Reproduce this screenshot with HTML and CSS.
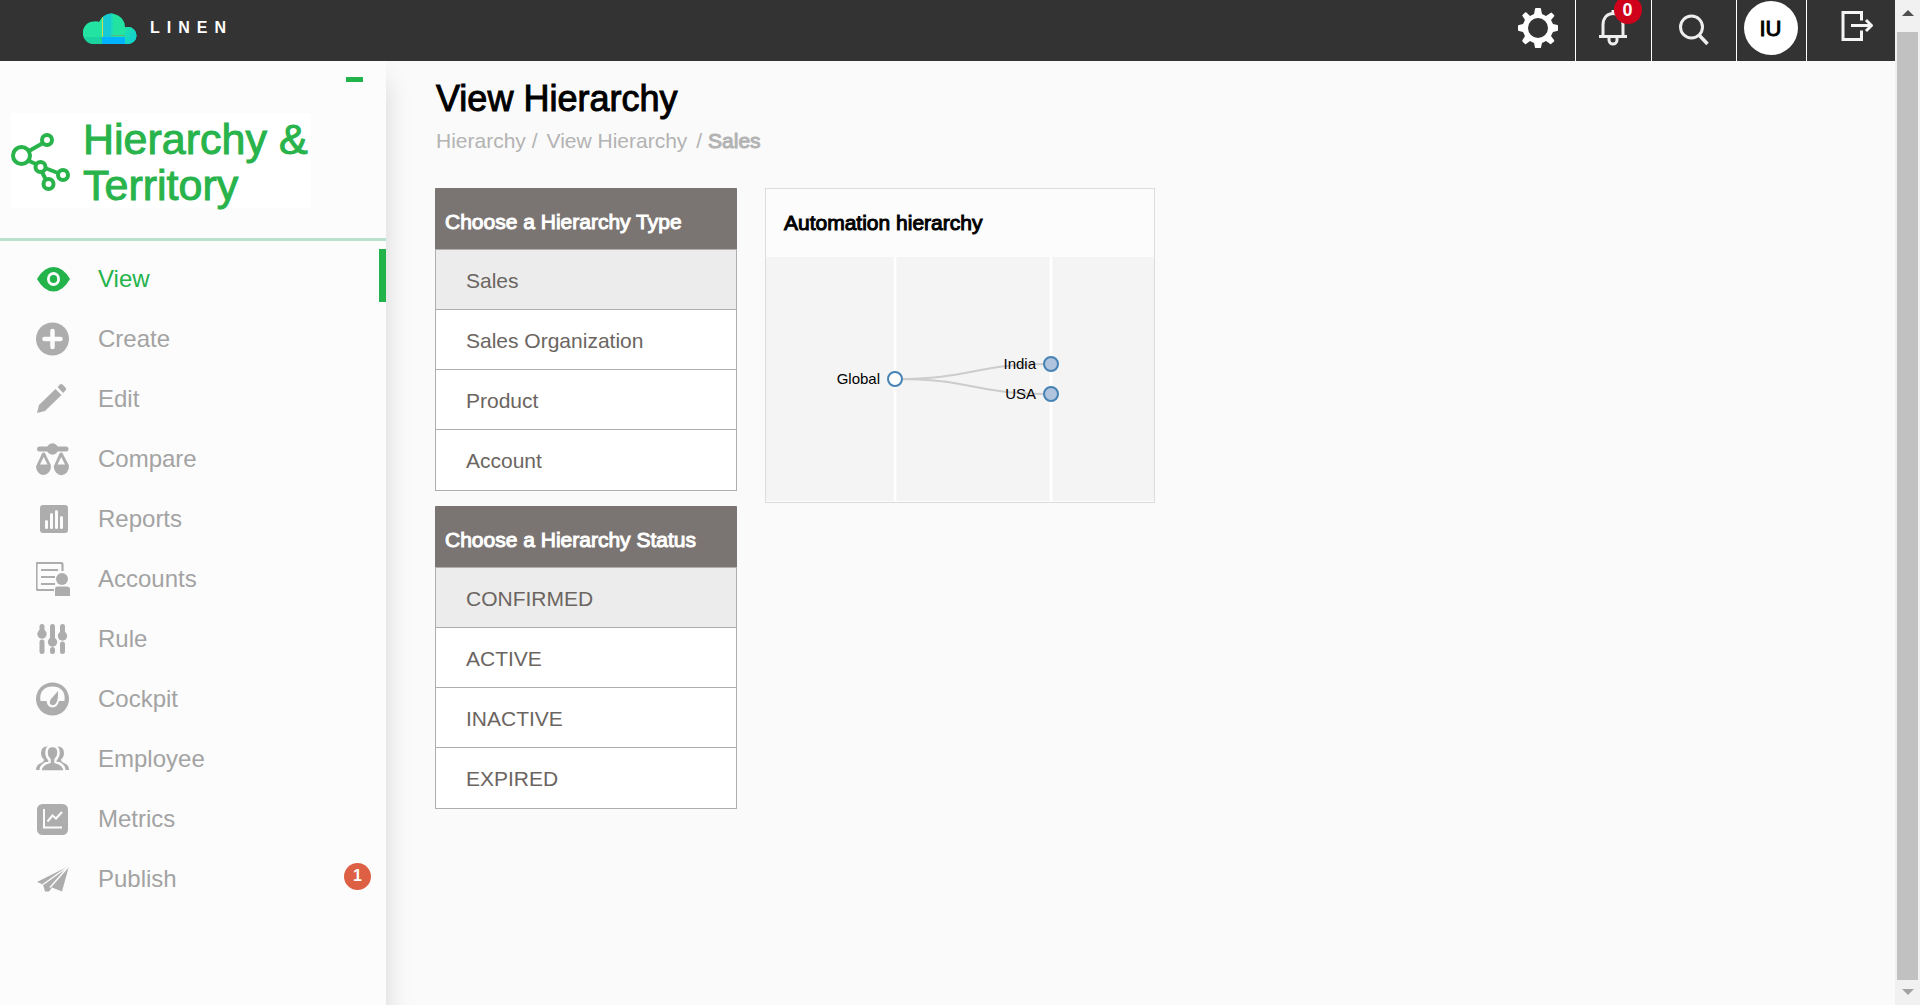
FILE: index.html
```html
<!DOCTYPE html>
<html lang="en">
<head>
<meta charset="utf-8">
<title>View Hierarchy</title>
<link rel="stylesheet" href="styles.css">
</head>
<body>
<div class="app">
  <header class="topbar">
    <a class="brand" href="#" aria-label="Linen home">
      <svg class="brand-cloud" width="54" height="34" viewBox="0 0 54 34" aria-hidden="true">
        <defs>
          <clipPath id="cloud"><path d="M11 34A11 11 0 0 1 11 11.500Q14 11 16 12A13.500 13.500 0 0 1 42 17.500A8.500 8.500 0 0 1 45 34Z M42 17.500L45 17A8.500 8.500 0 0 1 45 34H42Z"/></clipPath>
          <linearGradient id="side" x1="0" y1="0" x2="1" y2="1"><stop offset="0" stop-color="#1fe3a4"/><stop offset=".5" stop-color="#17d5c4"/><stop offset="1" stop-color="#0bd0d4"/></linearGradient>
        </defs>
        <g clip-path="url(#cloud)">
          <path fill="#22e3a1" d="M0 0h54v34H0z"/>
          <path fill="#1bd39e" d="M0 27h19v7H0z"/>
          <path fill="#16cbd4" d="M20 3h8v24h-8z"/>
          <path fill="#1bdcb8" d="M28 0h2v27h-2z"/>
          <path fill="url(#side)" d="M42 17h12v17H42z"/>
          <path fill="#00b2ff" d="M19 27h23v7H19z"/>
          <path fill="#c9df4d" d="M19 4h1v23h-1z"/>
          <path fill="#57b884" d="M28 25h14v1H28z"/>
        </g>
      </svg>
      <span class="brand-name">LINEN</span>
    </a>
    <div class="tools">
      <button class="tool tool-settings" type="button" aria-label="Settings">
        <svg width="40" height="40" viewBox="0 0 40 40" fill="#fff"><path fill-rule="evenodd" d="M17 1Q17 0 18 0h4Q23 0 23 1l1 5 4 2 4.500-3Q33.500 4 34 5l2 2Q36.500 7.500 36 8.500L33 12l2 4 4.500 1Q40 17 40 18v4Q40 23 39 23l-4 1-2 4 3 4Q36.500 33 36 33.500L33 36Q32.500 36.500 31.500 35.500L28 33l-4 2-1 4.500Q23 40 22 40h-4Q17 40 17 39.500L16 35l-4-2-4 3Q7.500 36.500 7 36L4.500 33.500Q4 33 4.500 32L7 28l-2-4-4-1Q0 23 0 22v-4Q0 17 1 17l4-1 2-4L4.500 8Q4 7.500 4.500 7L7 4.500Q7.500 4 8.500 4.500L12 8l4-2ZM20 10a10 10 0 1 0 0 20a10 10 0 1 0 0-20Z"/></svg>
      </button>
      <button class="tool tool-bell" type="button" aria-label="Notifications">
        <span class="bell-wrap">
          <svg width="30" height="36" viewBox="0 0 30 36" fill="none" stroke="#eee" stroke-width="3"><path d="M1 26.500h28M5 26V15C5 8 9 3.500 15 3.500S25 8 25 15v11M15 0v4M11 27v3a4 4 0 0 0 8 0v-3"/></svg>
          <span class="bell-count">0</span>
        </span>
      </button>
      <button class="tool tool-search" type="button" aria-label="Search">
        <svg width="30" height="32" viewBox="0 0 30 32" fill="none" stroke="#eee"><circle cx="12.500" cy="13" r="11" stroke-width="3"/><path d="M20 21l8.500 9" stroke-width="3.500"/></svg>
      </button>
      <button class="tool tool-user" type="button"><span class="avatar">IU</span></button>
      <button class="tool tool-logout" type="button" aria-label="Log out">
        <svg width="32" height="32" viewBox="0 0 32 32" fill="none" stroke="#f4f4f4" stroke-width="3"><path d="M20.500 10.500V2.500H2v27h18.500v-9"/><path d="M10 15.500h20M25 10l5.500 5.500L25 21"/></svg>
      </button>
    </div>
  </header>

  <div class="body">
    <aside class="sidebar">
      <div class="module">
        <button class="collapse" type="button" aria-label="Collapse menu"></button>
        <div class="module-logo">
          <svg width="60" height="60" viewBox="0 0 60 60" fill="none" stroke="#28b34b" stroke-width="4" aria-hidden="true"><circle cx="10.500" cy="24.500" r="8.500"/><circle cx="36" cy="9" r="5"/><circle cx="29.500" cy="36" r="5"/><circle cx="52" cy="44" r="5"/><circle cx="37.500" cy="53" r="5"/><path d="M18 20l14-8M17 29.500l9 4M34 37l13 5M31 41l4 8"/></svg>
          <h2 class="module-name">Hierarchy &amp;<br>Territory</h2>
        </div>
      </div>
      <nav class="menu" aria-label="Hierarchy and Territory">
        <a class="menu-item is-active" href="#"><svg class="ico" viewBox="0 0 34 34"><path fill-rule="evenodd" d="M1 17Q8 5 17.500 5T34 17Q27 29.500 17.500 29.500T1 17ZM17.500 10a6.500 7 0 1 0 0 14a6.500 7 0 1 0 0-14ZM17.500 13a3.700 4 0 1 1 0 8a3.700 4 0 1 1 0-8Z"/></svg>View</a>
        <a class="menu-item" href="#"><svg class="ico" viewBox="0 0 34 34"><circle cx="16.500" cy="17" r="16.500"/><path d="M16.500 9v16M8.500 17h16" stroke="#fcfcfc" stroke-width="4.500" stroke-linecap="round"/></svg>Create</a>
        <a class="menu-item" href="#"><svg class="ico" viewBox="0 0 34 34"><path d="M1 31l2-8L19.500 7l6 6L9 29ZM21.500 5l2.500-2.500Q25.500 1.500 27 3l2.500 2.500Q31 7 29.500 8.500L27 11Z"/></svg>Edit</a>
        <a class="menu-item" href="#"><svg class="ico" viewBox="0 0 34 34"><circle cx="16.500" cy="7" r="5.700"/><rect x="1" y="4.500" width="31.500" height="5" rx="2.500"/><path fill-rule="evenodd" d="M7.700 10.500q1 0 1.500 1L15 23.500a7.500 9 0 0 1-15 1L6 11.500q.7-1 1.700-1ZM7.700 15L4 22.500h7.500ZM25.200 10.500q1 0 1.500 1L33 23.500a7.500 9 0 0 1-15.300 1L23.500 11.500q.7-1 1.700-1ZM25.200 15L21.500 22.500H29Z"/></svg>Compare</a>
        <a class="menu-item" href="#"><svg class="ico" viewBox="0 0 34 34"><rect x="4" y="3" width="28" height="28" rx="3"/><path d="M10.500 19.500v6M15.500 12.500v13M20.500 9.500v16M25.500 15.500v10" stroke="#fcfcfc" stroke-width="3" stroke-linecap="round"/></svg>Reports</a>
        <a class="menu-item" href="#"><svg class="ico" viewBox="0 0 34 34"><path d="M18 28H2.500Q0.500 28 .5 26V2.500Q.5.800 2.500.8h22Q26.500.800 26.500 2.500V9M5 8h17M5 15h14M5 22h14" fill="none" stroke="currentColor" stroke-width="2.200"/><circle cx="26" cy="17" r="6"/><path d="M19 34v-7q0-2.500 2.500-2.500h9Q34 24.500 34 27v7Z"/></svg>Accounts</a>
        <a class="menu-item" href="#"><svg class="ico" viewBox="0 0 34 34"><path d="M6 4.500V10M6 20v9.500M16.500 4.500V19M16.500 27.500v2M26.500 4.500V12M26.500 22v7.500" stroke="currentColor" stroke-width="5" stroke-linecap="round"/><circle cx="6" cy="12" r="4.700"/><circle cx="16.500" cy="20" r="4.700"/><circle cx="26.500" cy="14" r="4.700"/></svg>Rule</a>
        <a class="menu-item" href="#"><svg class="ico" viewBox="0 0 34 34"><circle cx="16.500" cy="17" r="16.500"/><path fill="#fcfcfc" d="M4.500 19C3 9 9 4.500 16.500 4.500S30 9 28.500 19H23q-1.500 6.500-6.500 6.500T10.500 19Z"/><path d="M22 9q.5 8-2 12.500-3 3-6 .5-1-3 1-5Z"/></svg>Cockpit</a>
        <a class="menu-item" href="#"><svg class="ico" viewBox="0 0 34 34"><path d="M11 4.500Q5 4.500 5 11q0 4 3 6.500 0 2.500-4 4Q0 23 0 28h5V29H28V28h5q0-5-4-6.500-4-1.500-4-4 3-2.500 3-6.500 0-6.500-6-6.500Z"/><path d="M16.500 4q6 0 6 6.500 0 4.500-3 7v2.500q9 2 9 9.500H4.500q0-7.500 9-9.500v-2.500q-3-2.500-3-7Q10.500 4 16.500 4Z" stroke="#fcfcfc" stroke-width="2.500"/><path d="M0 29h33v3H0Z" fill="#fcfcfc"/></svg>Employee</a>
        <a class="menu-item" href="#"><svg class="ico" viewBox="0 0 34 34"><rect x="1" y="2" width="31" height="31" rx="5.500"/><path d="M8 7v18.500h18M11.500 19.500l5-6 3.500 3 6-6.500" stroke="#fcfcfc" stroke-width="2" fill="none"/></svg>Metrics</a>
        <a class="menu-item" href="#"><svg class="ico" viewBox="0 0 34 34"><path d="M1 20L33 4 26 29.500 16 25.500 13 29.500H9L7 22.500Z"/><path d="M33 4L7 22.500M33 4L14 25.500" stroke="#fcfcfc" stroke-width="1.500"/></svg>Publish<span class="menu-count">1</span></a>
      </nav>
    </aside>

    <main class="content">
      <h1 class="page-title">View Hierarchy</h1>
      <nav class="crumbs" aria-label="Breadcrumb">
        <span class="crumb"><a href="#">Hierarchy</a> /</span>
        <a href="#">View Hierarchy</a>
        <span class="crumb">/ <span class="crumb-current">Sales</span></span>
      </nav>
      <div class="panels">
        <div class="filters">
          <section class="picker">
            <h2 class="picker-title">Choose a Hierarchy Type</h2>
            <button class="option is-chosen" type="button">Sales</button>
            <button class="option" type="button">Sales Organization</button>
            <button class="option" type="button">Product</button>
            <button class="option" type="button">Account</button>
          </section>
          <section class="picker">
            <h2 class="picker-title">Choose a Hierarchy Status</h2>
            <button class="option is-chosen" type="button">CONFIRMED</button>
            <button class="option" type="button">ACTIVE</button>
            <button class="option" type="button">INACTIVE</button>
            <button class="option" type="button">EXPIRED</button>
          </section>
        </div>
        <section class="card">
          <h3 class="card-title">Automation hierarchy</h3>
          <svg class="tree" width="388" height="244" viewBox="0 0 388 244" role="img" aria-label="Global, with India and USA below it">
            <path d="M129 0v244M285 0v244" stroke="#fff" stroke-width="2.500"/>
            <path d="M129 122C207 122 207 107 285 107M129 122C207 122 207 137 285 137" fill="none" stroke="#ccc" stroke-width="2"/>
            <g stroke="#4682b4" stroke-width="2"><circle cx="129" cy="122" r="7" fill="#fff"/><circle cx="285" cy="107" r="7" fill="#b0c4de"/><circle cx="285" cy="137" r="7" fill="#b0c4de"/></g>
            <g class="tree-label" text-anchor="end"><text x="114" y="127">Global</text><text x="270" y="112">India</text><text x="270" y="142">USA</text></g>
          </svg>
        </section>
      </div>
    </main>
  </div>
</div>
<div class="scrollbar" aria-hidden="true">
  <span class="arrow arrow-up"></span>
  <span class="thumb"></span>
  <span class="arrow arrow-down"></span>
</div>
</body>
</html>
```
FILE: styles.css
```css
* { box-sizing: border-box; }

body {
  margin: 0;
  min-height: 100vh;
  display: flex;
  background: #fafafa;
  color: #000;
  font-family: "Liberation Sans", Arial, sans-serif;
}
h1, h2, h3 { margin: 0; font-weight: 400; }
a { color: inherit; text-decoration: none; }
button { border: 0; margin: 0; padding: 0; background: none; font: inherit; color: inherit; cursor: pointer; }
svg { display: block; flex: none; }

.app { flex: 1; min-width: 0; display: flex; flex-direction: column; }

/* Top bar */
.topbar { height: 61px; display: flex; justify-content: space-between; background: #333; color: #fff; }
.brand { display: flex; align-items: center; gap: 13px; padding: 0 0 7px 83px; }
.brand-name { padding-top: 2px; font-size: 16px; font-weight: 700; letter-spacing: 7px; }
.tools { display: flex; }
.tool { display: flex; align-items: center; justify-content: center; padding-bottom: 5px; border-left: 1px solid #fff; }
.tool-settings { width: 74px; border-left: 0; }
.tool-bell { width: 76px; }
.tool-search { width: 85px; padding-bottom: 2px; }
.tool-user { width: 70px; padding-right: 2px; }
.tool-logout { width: 89px; padding: 0 0 9px 12px; }
.bell-wrap { position: relative; padding-right: 2px; }
.bell-count {
  position: absolute; left: 16px; top: -14px;
  width: 28px; height: 28px; border-radius: 50%;
  background: #d0021b; font-size: 18px; line-height: 28px; font-weight: 700;
}
.avatar { width: 54px; height: 54px; border-radius: 50%; background: #fff; color: #000; font-size: 22px; line-height: 56px; -webkit-text-stroke: 1px currentColor; }

.body { flex: 1; display: flex; }

/* Sidebar */
.sidebar { width: 386px; flex: none; background: #fcfcfc; box-shadow: 0 20px 24px rgba(0, 0, 0, .15); clip-path: inset(0 -40px 0 0); }
.module { display: flex; flex-direction: column; padding: 16px 0 30px 11px; border-bottom: 3px solid #b9e2cd; }
.collapse { align-self: flex-end; width: 17px; height: 5px; margin: 0 23px 31px 0; background: #22b34b; }
.module-logo { width: 300px; display: flex; align-items: center; gap: 12px; background: #fff; }
.module-name { color: #28b34b; font-size: 43px; line-height: 46px; white-space: nowrap; padding: 3px 0 0; -webkit-text-stroke: 1px currentColor; }

.menu { display: flex; flex-direction: column; padding-top: 8px; color: #a3a3a3; }
.menu-item { position: relative; height: 60px; display: flex; align-items: center; gap: 28px; padding-left: 36px; font-size: 24px; }
.menu-item.is-active { color: #22b34b; }
.menu-item.is-active::after { content: ""; position: absolute; right: 0; top: 0; width: 7px; height: 53px; background: #22b34b; }
.ico { width: 34px; height: 34px; fill: #adadad; color: #adadad; }
.is-active .ico { fill: #22b34b; }
.menu-count {
  width: 27px; height: 27px; margin: 0 15px 6px auto; border-radius: 50%;
  background: #dd6044; color: #fff; font-size: 16px; font-weight: 700; line-height: 25px; text-align: center;
}

/* Content */
.content { flex: 1; min-width: 0; padding: 17px 48px 48px; }
.page-title { padding-left: 2px; font-size: 36px; line-height: 42px; -webkit-text-stroke: 1px currentColor; }
.crumbs { display: flex; gap: 9px; margin: 8px 0 35px; padding-left: 2px; color: #b3b3b3; font-size: 21px; line-height: 25px; }
.crumb-current, .picker-title { -webkit-text-stroke: 1px currentColor; }
.panels { display: flex; align-items: flex-start; gap: 28px; }
.filters { width: 302px; display: grid; gap: 15px; margin-left: 1px; }
.picker { display: flex; flex-direction: column; border: 1px solid #b0aeac; border-top-color: #7a7572; background: #fff; }
.picker-title { margin: 0 -1px; height: 60px; padding: 5px 10px 0; background: #7a7572; color: #fff; font-size: 21px; line-height: 56px; }
.option { height: 60px; padding: 2px 30px 0; border-top: 1px solid #b0aeac; color: #6b6561; font-size: 21px; text-align: left; }
.option:last-child { height: 61px; }
.option.is-chosen { background: #ececec; }

.card { border: 1px solid #dcdcdc; background: #fcfcfc; }
.card-title { padding: 0 18px; font-size: 21px; line-height: 68px; -webkit-text-stroke: 1px currentColor; }
.tree { background: #f4f4f4; margin-bottom: 1px; }
.tree-label { font-size: 15px; fill: #000; }

/* Window scroll bar */
.scrollbar { width: 25px; flex: none; display: flex; flex-direction: column; align-items: center; background: #f1f1f1; padding: 10px 0; }
.thumb { flex: 1; width: 21px; margin: 16px 0 9px; background: #c1c1c1; }
.arrow { border: 6px solid transparent; }
.arrow-up { border-top: 0; border-bottom-color: #505050; }
.arrow-down { border-bottom: 0; border-top-color: #a3a3a3; }
```
